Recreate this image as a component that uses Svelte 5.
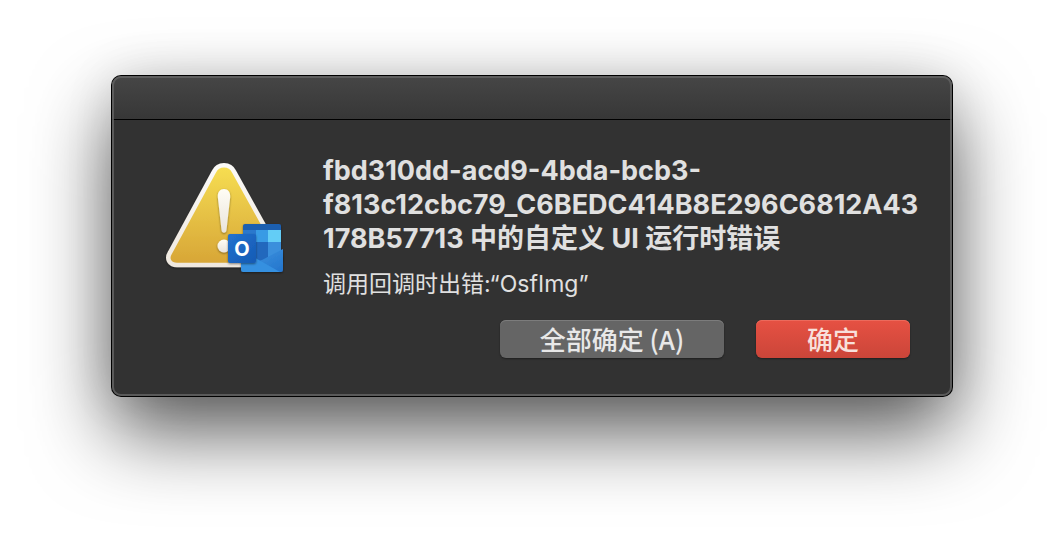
<script>
  const title = ['fbd310dd-acd9-4bda-bcb3-', 'f813c12cbc79_C6BEDC414B8E296C6812A43', '178B57713 中的自定义 UI 运行时错误'];
  let open = $state(true);
  const close = () => (open = false);
</script>

<main>
  {#if open}
    <div class="dialog" role="alertdialog" aria-labelledby="title" aria-describedby="message">
      <div class="titlebar"></div>
      <div class="body">
        <svg class="icon" viewBox="8 10 122 116" width="122" height="116" aria-hidden="true">
          <defs>
            <linearGradient id="gold" x1="0" y1="0" x2="0" y2="1">
              <stop offset="0" stop-color="#f7df52" />
              <stop offset="0.5" stop-color="#e6c145" />
              <stop offset="1" stop-color="#d7a536" />
            </linearGradient>
            <linearGradient id="rim" x1="0" y1="0" x2="0" y2="1">
              <stop offset="0" stop-color="#fbfaf7" />
              <stop offset="1" stop-color="#efe8df" />
            </linearGradient>
            <linearGradient id="mark" x1="0" y1="0" x2="0" y2="1">
              <stop offset="0" stop-color="#fffdf5" />
              <stop offset="1" stop-color="#e9e4dc" />
            </linearGradient>
            <linearGradient id="mail" x1="0" y1="0" x2="1" y2="1">
              <stop offset="0" stop-color="#3f98e2" />
              <stop offset="1" stop-color="#2474cc" />
            </linearGradient>
            <linearGradient id="tile" x1="0" y1="0" x2="1" y2="1">
              <stop offset="0" stop-color="#2272cf" />
              <stop offset="1" stop-color="#155ab4" />
            </linearGradient>
            <filter id="soft" x="-20%" y="-20%" width="140%" height="140%">
              <feDropShadow dx="0" dy="1" stdDeviation="1" flood-opacity="0.45" />
            </filter>
            <clipPath id="sheet"><path d="M90 74H124Q126 74 126 76V118H88V76Q88 74 90 74Z" /></clipPath>
          </defs>
          <path d="M59 21.5C63 13 75 13 79 21.5L124 102.5C128 110 123.5 115 117 115H22C14.5 115 11 109 15 102.5Z" fill="url(#gold)" stroke="url(#rim)" stroke-width="4.5" filter="url(#soft)" />
          <path d="M69 39C73 39 75.5 42 75.2 47L71.5 80C71.2 83.5 66.8 83.5 66.5 80L62.8 47C62.5 42 65 39 69 39Z" fill="url(#mark)" filter="url(#soft)" />
          <circle cx="69" cy="96" r="6.5" fill="url(#mark)" filter="url(#soft)" />
          <g filter="url(#soft)">
            <g clip-path="url(#sheet)">
              <rect x="88" y="74" width="38" height="44" fill="#1b5fb0" />
              <rect x="88" y="80" width="13" height="12" fill="#2a78cd" />
              <rect x="101" y="80" width="12" height="12" fill="#379be5" />
              <rect x="113" y="80" width="13" height="12" fill="#63cdf6" />
              <rect x="88" y="92" width="25" height="26" fill="#2468bd" />
              <rect x="113" y="92" width="13" height="26" fill="#3a8fdc" />
            </g>
            <path d="M107 110L128 99V120Q128 122 126 122H88L100 112Z" fill="url(#mail)" />
            <path d="M86 100L125 122H88Q86 122 86 120Z" fill="#3590e0" />
          </g>
          <rect x="73" y="84" width="28" height="29" rx="2" fill="url(#tile)" filter="url(#soft)" />
          <text x="87" y="106" text-anchor="middle" class="letter">O</text>
        </svg>
        <div class="content">
          <h1 id="title">{#each title as line}<span>{line}</span>{/each}</h1>
          <p id="message">调用回调时出错:“OsfImg”</p>
          <div class="actions">
            <button class="all" type="button" accesskey="a" onclick={close}>全部确定 (A)</button>
            <button class="ok" type="button" onclick={close}>确定</button>
          </div>
        </div>
      </div>
    </div>
  {/if}
</main>

<style>
  :global(body) {
    margin: 0;
    background: #fff;
  }
  main {
    box-sizing: border-box;
    min-height: 100vh;
    padding: 76px 112px 148px;
    overflow: hidden;
    font-family: Inter, "Noto Sans CJK SC", sans-serif;
    color: #e0e0e0;
  }
  .dialog {
    position: relative;
    border-radius: 9px;
    background: #323232;
    box-shadow: 0 0 0 1px #000, 0 36px 80px rgba(0, 0, 0, 0.65), 0 0 50px rgba(0, 0, 0, 0.1);
  }
  .dialog::after {
    content: "";
    position: absolute;
    inset: 0;
    border: 2px solid #646464;
    border-radius: 9px;
    opacity: 0.8;
    pointer-events: none;
  }
  .titlebar {
    height: 43px;
    border-bottom: 1px solid #000;
    border-radius: 9px 9px 0 0;
    background: linear-gradient(#464646, #373737);
  }
  .body {
    display: flex;
    gap: 38px;
    padding: 34px 42px 38px 51px;
  }
  .icon {
    flex: none;
    margin-top: 6px;
  }
  .letter {
    font: 700 20px Inter, sans-serif;
    fill: #fff;
  }
  .content {
    flex: 1;
    min-width: 0;
  }
  h1 {
    margin: 0;
    font-size: 27px;
    line-height: 34px;
    font-weight: 700;
  }
  h1 span {
    display: block;
    white-space: nowrap;
  }
  p {
    margin: 12px 0 20px;
    font-size: 23px;
    line-height: 32px;
  }
  .actions {
    display: flex;
    justify-content: flex-end;
    gap: 32px;
  }
  button {
    height: 38px;
    padding: 0;
    border: 0;
    border-radius: 6px;
    font: 500 26px/38px "Noto Sans CJK SC", sans-serif;
    color: #e8e8e8;
  }
  .all {
    width: 224px;
    background: #656565;
    box-shadow: inset 0 1px #7c7c7c, 0 1px 2px rgba(0, 0, 0, 0.4);
  }
  .ok {
    width: 154px;
    background: linear-gradient(#e65143, #cb4539);
    box-shadow: inset 0 1px #ec6a5c, 0 1px 2px rgba(0, 0, 0, 0.4);
    color: #f8e0dc;
  }
</style>
